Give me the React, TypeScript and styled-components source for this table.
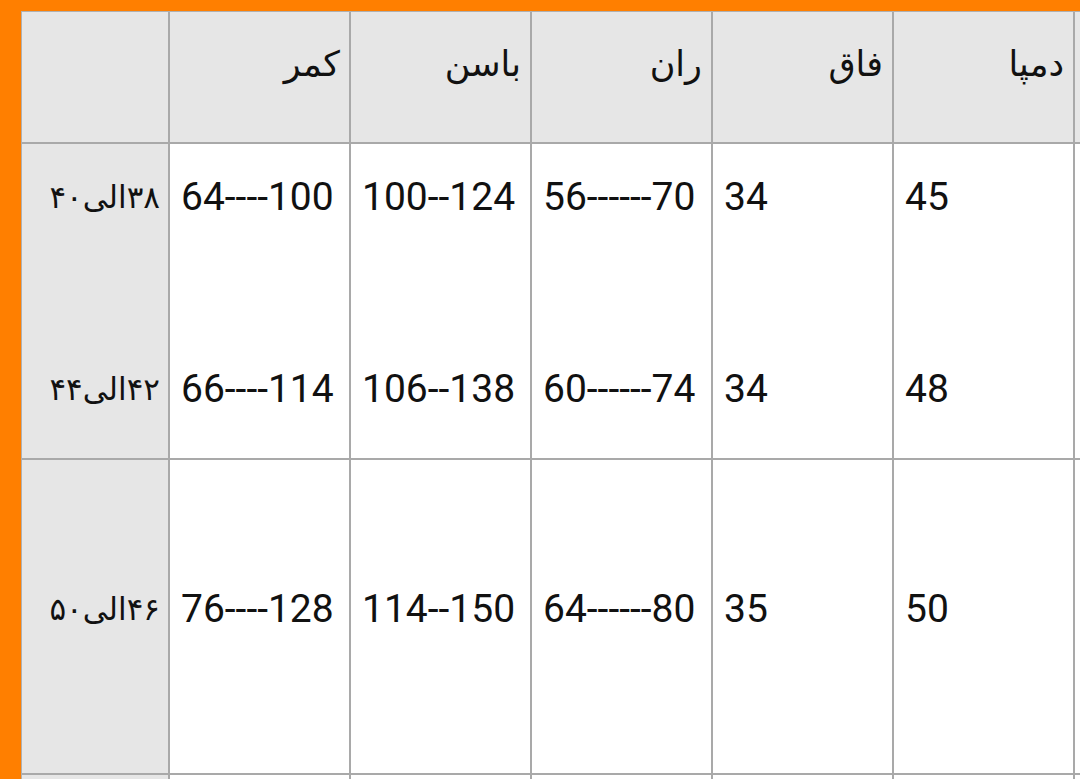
import React from "react";
import styled, { createGlobalStyle } from "styled-components";

const Global = createGlobalStyle`
  html, body { margin: 0; padding: 0; }
  body { background: #ff7f00; font-family: Roboto, "DejaVu Sans", sans-serif; }
`;

const Frame = styled.div`
  width: 1080px;
  height: 779px;
  overflow: hidden;
  box-sizing: border-box;
  padding: 11px 0 0 21px;
  background: #ff7f00;
`;

const Grid = styled.div`
  display: grid;
  width: max-content;
  grid-template-columns: 146px repeat(6, 179px);
  grid-template-rows: 130px 314px 313px 120px;
  gap: 2px;
  background: #a9a9a9;
  border-top: 1px solid #b0b0b0;
  border-left: 1px solid #b0b0b0;
`;

const Cell = styled.div<{ $gray?: boolean; $align?: "left" | "right" }>`
  background: ${(p) => (p.$gray ? "#e6e6e6" : "#ffffff")};
  display: flex;
  flex-direction: column;
  justify-content: center;
  align-items: ${(p) => (p.$align === "right" ? "flex-end" : "flex-start")};
  box-sizing: border-box;
  padding: 0 11px 16px 11px;
  color: #111;
`;

const HeadCell = styled(Cell)`
  padding: 0 9px 26px 11px;
`;

const SideCell = styled(Cell)`
  padding: 0 8px 16px 8px;
`;

const Stack = styled.div`
  display: flex;
  flex-direction: column;
  gap: 144px;
  align-items: inherit;
`;

const Num = styled.span`
  font-family: Roboto, "Liberation Sans", sans-serif;
  font-size: 39px;
  line-height: 48px;
  white-space: nowrap;
`;

const Fa = styled.span<{ $size?: number }>`
  font-family: "DejaVu Sans", sans-serif;
  direction: rtl;
  unicode-bidi: isolate;
  font-size: ${(p) => p.$size ?? 28}px;
  line-height: 48px;
  white-space: nowrap;
`;

const headers = ["کمر", "باسن", "ران", "فاق", "دمپا", ""];

type Row = { sizes: string[]; values: string[][] };

const rows: Row[] = [
  {
    sizes: ["۳۸الی۴۰", "۴۲الی۴۴"],
    values: [
      ["64----100", "66----114"],
      ["100--124", "106--138"],
      ["56------70", "60------74"],
      ["34", "34"],
      ["45", "48"],
      ["", ""],
    ],
  },
  {
    sizes: ["۴۶الی۵۰"],
    values: [["76----128"], ["114--150"], ["64------80"], ["35"], ["50"], [""]],
  },
];

export default function App() {
  return (
    <>
      <Global />
      <Frame>
        <Grid>
          <HeadCell $gray $align="right" />
          {headers.map((h, i) => (
            <HeadCell key={i} $gray $align="right">
              {h && <Fa $size={35}>{h}</Fa>}
            </HeadCell>
          ))}
          {rows.map((r, ri) => (
            <React.Fragment key={ri}>
              <SideCell $gray $align="right">
                <Stack>
                  {r.sizes.map((s, si) => (
                    <Fa key={si} $size={31}>
                      {s}
                    </Fa>
                  ))}
                </Stack>
              </SideCell>
              {r.values.map((col, ci) => (
                <Cell key={ci} $align="left">
                  <Stack>
                    {col.map((v, vi) => (
                      <Num key={vi}>{v}</Num>
                    ))}
                  </Stack>
                </Cell>
              ))}
            </React.Fragment>
          ))}
          <SideCell $gray />
          {headers.map((_, i) => (
            <Cell key={i} />
          ))}
        </Grid>
      </Frame>
    </>
  );
}
